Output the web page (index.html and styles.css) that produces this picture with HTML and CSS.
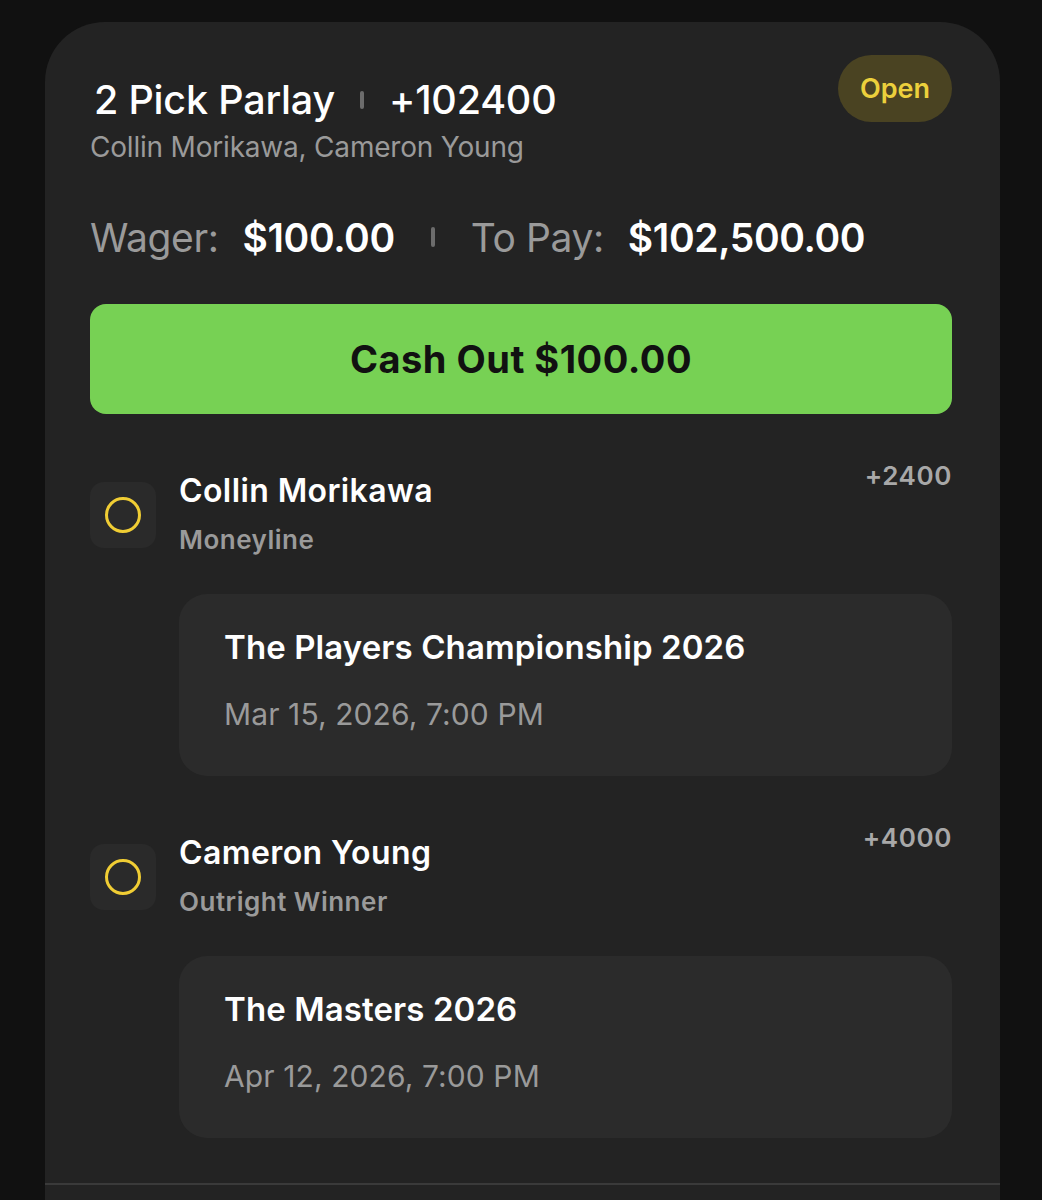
FILE: index.html
```html
<!DOCTYPE html>
<html lang="en">
<head>
    <meta charset="UTF-8">
    <meta name="viewport" content="width=device-width, initial-scale=1.0">
    <title>2 Pick Parlay</title>
    <link rel="stylesheet" href="styles.css">
</head>
<body>
    <div class="card">
        <div class="header">
            <div class="header-text">
                <div class="title">
                    <span>2 Pick Parlay</span>
                    <span class="sep"></span>
                    <span>+102400</span>
                </div>
                <div class="subtitle">Collin Morikawa, Cameron Young</div>
            </div>
            <div class="status">Open</div>
        </div>

        <div class="wager-row">
            <span class="label">Wager:</span>
            <span class="amount">$100.00</span>
            <span class="sep"></span>
            <span class="label">To Pay:</span>
            <span class="amount">$102,500.00</span>
        </div>

        <button class="cash-out">Cash Out $100.00</button>

        <div class="leg">
            <div class="leg-head">
                <div class="leg-icon"><span class="ring"></span></div>
                <div class="leg-info">
                    <div class="leg-name">Collin Morikawa</div>
                    <div class="leg-type">Moneyline</div>
                </div>
                <div class="leg-odds">+2400</div>
            </div>
            <div class="event">
                <div class="event-name">The Players Championship 2026</div>
                <div class="event-date">Mar 15, 2026, 7:00 PM</div>
            </div>
        </div>

        <div class="leg">
            <div class="leg-head">
                <div class="leg-icon"><span class="ring"></span></div>
                <div class="leg-info">
                    <div class="leg-name">Cameron Young</div>
                    <div class="leg-type">Outright Winner</div>
                </div>
                <div class="leg-odds">+4000</div>
            </div>
            <div class="event">
                <div class="event-name">The Masters 2026</div>
                <div class="event-date">Apr 12, 2026, 7:00 PM</div>
            </div>
        </div>

        <div class="divider"></div>
    </div>
</body>
</html>
```

FILE: styles.css
```css
body {
    margin: 0;
    padding: 22px 0 0 45px;
    background-color: #111111;
    font-family: Inter, "Noto Sans", sans-serif;
    color: #fff;
    height: 1178px;
    overflow: hidden;
}

.card {
    width: 955px;
    min-height: 1200px;
    box-sizing: border-box;
    padding: 33px 48px 0 45px;
    background-color: #232323;
    border-radius: 60px 60px 0 0;
}

.header {
    display: flex;
    justify-content: space-between;
    align-items: flex-start;
}

.header-text {
    padding-top: 21px;
}

.title {
    display: flex;
    align-items: center;
    gap: 25px;
    height: 48px;
    padding-left: 4px;
    font-size: 39.5px;
    font-weight: 500;
    letter-spacing: -0.2px;
}

.sep {
    display: inline-block;
    width: 4px;
    height: 18px;
    border-radius: 2px;
    background-color: #6c6c6c;
}

.subtitle {
    margin-top: 6px;
    line-height: 34px;
    font-size: 28px;
    color: #9a9a9a;
    letter-spacing: -0.2px;
}

.status {
    padding: 0 22px;
    height: 67px;
    line-height: 67px;
    border-radius: 34px;
    background-color: #4a4322;
    color: #ecd03c;
    font-size: 27px;
    font-weight: 600;
}

.wager-row {
    display: flex;
    align-items: center;
    margin-top: 49px;
    height: 48px;
    font-size: 39px;
    letter-spacing: -0.4px;
}

.wager-row .label {
    color: #9a9a9a;
    margin-right: 24px;
}

.wager-row .amount {
    font-weight: 600;
}

.wager-row .sep {
    margin: 0 36px;
    height: 20px;
}

.cash-out {
    display: block;
    width: 100%;
    height: 110px;
    margin-top: 43px;
    border: none;
    border-radius: 16px;
    background-color: #77d154;
    color: #111;
    font-family: Inter, "Noto Sans", sans-serif;
    font-size: 38px;
    font-weight: 700;
    letter-spacing: 0.5px;
}

.leg {
    margin-top: 46px;
}

.leg-head {
    display: flex;
    align-items: flex-start;
}

.leg-icon {
    display: flex;
    align-items: center;
    justify-content: center;
    width: 66px;
    height: 66px;
    margin-top: 22px;
    margin-right: 23px;
    border-radius: 14px;
    background-color: #2a2a2a;
}

.ring {
    width: 30px;
    height: 30px;
    border: 3px solid #f0cd34;
    border-radius: 50%;
}

.leg-info {
    flex: 1;
    padding-top: 11px;
}

.leg-name {
    line-height: 40px;
    font-size: 32px;
    font-weight: 600;
    letter-spacing: 0.4px;
}

.leg-type {
    margin-top: 12px;
    line-height: 34px;
    font-size: 26px;
    font-weight: 600;
    color: #9a9a9a;
    letter-spacing: 0.5px;
}

.leg-odds {
    line-height: 32px;
    font-size: 26px;
    font-weight: 600;
    color: #a8a8a8;
    letter-spacing: 0.6px;
}

.event {
    margin: 37px 0 0 89px;
    height: 182px;
    box-sizing: border-box;
    padding: 33px 45px 0;
    border-radius: 28px;
    background-color: #2b2b2b;
}

.event-name {
    line-height: 40px;
    font-size: 33px;
    font-weight: 600;
    letter-spacing: 0.1px;
}

.event-date {
    margin-top: 29px;
    line-height: 36px;
    font-size: 30px;
    color: #9a9a9a;
    letter-spacing: 0.1px;
}

.divider {
    height: 2px;
    margin: 45px -48px 0 -45px;
    background-color: #3a3a3a;
}
```
